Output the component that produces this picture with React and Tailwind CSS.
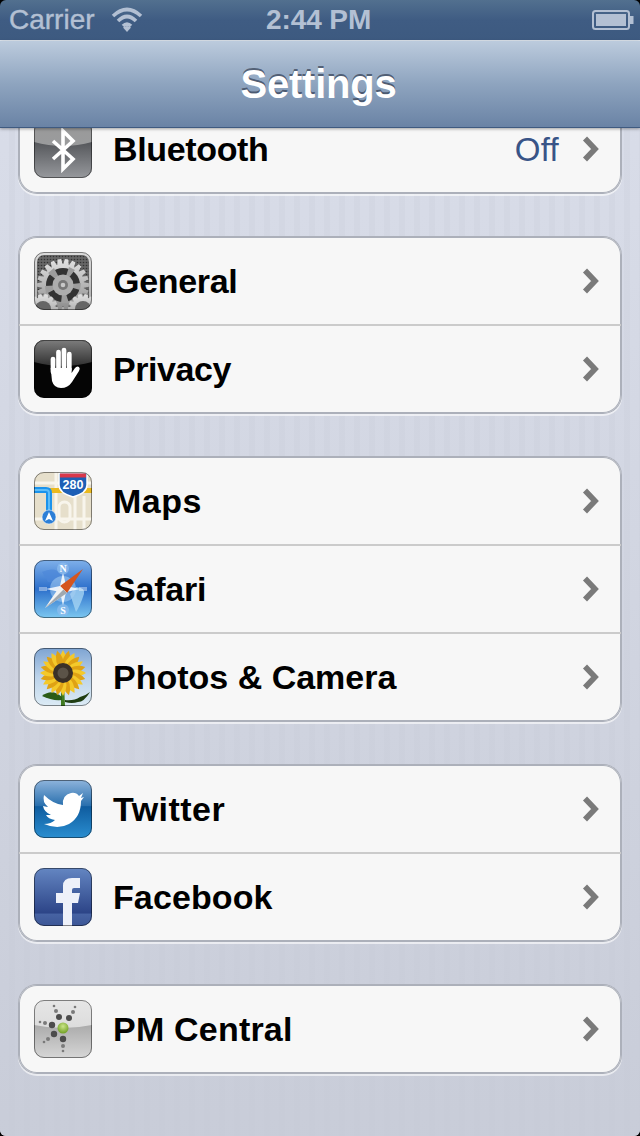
import React from 'react'

const gearPath = (cx, cy, r1, r2, n) => {
    const pts = []
    const step = (Math.PI * 2) / n
    for (let i = 0; i < n; i++) {
        const a = i * step
        const list = [[-0.5, r1], [-0.27, r2], [0.27, r2], [0.5, r1]]
        list.forEach(([o, r]) => {
            const t = a + o * step * 0.9
            pts.push(`${(cx + Math.cos(t) * r).toFixed(2)},${(cy + Math.sin(t) * r).toFixed(2)}`)
        })
    }
    return `M${pts.join('L')}Z`
}

const IconBox = ({ children }) => (
    <svg width="58" height="58" viewBox="0 0 58 58" className="shrink-0 block">
        <defs>
            <clipPath id="iconClip"><rect width="58" height="58" rx="10" /></clipPath>
        </defs>
        <g clipPath="url(#iconClip)">{children}</g>
        <rect x="0.5" y="0.5" width="57" height="57" rx="9.5" fill="none" stroke="#000" strokeOpacity="0.45" />
    </svg>
)

const BluetoothIcon = () => (
    <IconBox>
        <defs>
            <linearGradient id="btBg" x1="0" y1="0" x2="0" y2="1">
                <stop offset="0" stopColor="#9a9a9a" />
                <stop offset="1" stopColor="#9a9c9f" />
            </linearGradient>
            <linearGradient id="btLow" x1="0" y1="0" x2="0" y2="1">
                <stop offset="0" stopColor="#55575b" />
                <stop offset="1" stopColor="#97999d" />
            </linearGradient>
        </defs>
        <rect width="58" height="58" fill="url(#btBg)" />
        <path d="M0 22Q29 30 58 22V58H0Z" fill="url(#btLow)" />
        <path d="M19 21L39 39L29 49V11L39 21L19 39" fill="none" stroke="#fff" strokeWidth="3.600" />
    </IconBox>
)

const GeneralIcon = () => (
    <IconBox>
        <defs>
            <linearGradient id="gnFrame" x1="0" y1="0" x2="0" y2="1">
                <stop offset="0" stopColor="#dcdcdc" />
                <stop offset="1" stopColor="#a8a8a8" />
            </linearGradient>
            <pattern id="gnDots" width="3" height="3" patternUnits="userSpaceOnUse">
                <rect width="3" height="3" fill="#666" />
                <circle cx="1.5" cy="1.5" r="0.8" fill="#333" />
            </pattern>
            <linearGradient id="gnGear" x1="0" y1="0" x2="0" y2="1">
                <stop offset="0" stopColor="#e2e2e2" />
                <stop offset="1" stopColor="#8a8a8a" />
            </linearGradient>
        </defs>
        <rect width="58" height="58" fill="url(#gnFrame)" />
        <rect x="3" y="3" width="52" height="52" rx="7" fill="url(#gnDots)" />
        <path d={gearPath(29, 33, 21, 26, 22)} fill="url(#gnGear)" />
        <circle cx="29" cy="33" r="17" fill="#333" />
        <path d="M29 33L35 15L41 18ZM29 33L47 31L46 38ZM29 33L35 51H27ZM29 33L12 42L11 34ZM29 33L14 21L20 16Z" fill="#9d9d9d" />
        <circle cx="29" cy="33" r="10.500" fill="#adadad" />
        <circle cx="29" cy="33" r="5" fill="#777" />
        <circle cx="29" cy="33" r="2.300" fill="#c8c8c8" />
        <path d={gearPath(9, 57, 12, 15, 14)} fill="url(#gnGear)" />
        <path d={gearPath(49, 57, 12, 15, 14)} fill="url(#gnGear)" />
        <circle cx="9" cy="57" r="8" fill="#666" />
        <circle cx="49" cy="57" r="8" fill="#666" />
    </IconBox>
)

const PrivacyIcon = () => (
    <IconBox>
        <defs>
            <linearGradient id="prTop" x1="0" y1="0" x2="0" y2="1">
                <stop offset="0" stopColor="#7d7d7d" />
                <stop offset="1" stopColor="#303030" />
            </linearGradient>
        </defs>
        <rect width="58" height="58" fill="#050505" />
        <path d="M0 0H58V22Q29 30 0 22Z" fill="url(#prTop)" />
        <g stroke="#fff" strokeWidth="4.700" strokeLinecap="round" fill="none">
            <path d="M19 32V19" />
            <path d="M24.500 30V12" />
            <path d="M30 30V10" />
            <path d="M35.300 30V14" />
        </g>
        <path d="M16.700 28H37.600V33L41 28Q43 25.500 45 27Q46.500 28.500 45 31L38 42Q34 48 27 48Q20 48 18 41Z" fill="#fff" />
    </IconBox>
)

const MapsIcon = () => (
    <IconBox>
        <rect width="58" height="58" fill="#e6dfcb" />
        <path d="M0 11H58M22 0V58M0 47H58M41 24V58M50 24V58" stroke="#f8f5ec" strokeWidth="3" fill="none" />
        <rect x="25" y="30" width="11" height="20" rx="5.500" fill="none" stroke="#f8f5ec" strokeWidth="3" />
        <rect y="16" width="58" height="5" fill="#eab91e" />
        <path d="M0 18H12Q15 18 15 21V42" stroke="#1b93ec" strokeWidth="6" fill="none" />
        <path d="M0 18H12Q15 18 15 21V42" stroke="#5cbcf8" strokeWidth="2" fill="none" />
        <circle cx="15" cy="45" r="7" fill="#2d7fd6" stroke="#fff" strokeOpacity="0.5" />
        <path d="M15 40L19 49L15 47L11 49Z" fill="#fff" />
        <path d="M25 1H53V13Q53 21 39 25Q25 21 25 13Z" fill="#1d5fb5" stroke="#fff" strokeWidth="1.500" />
        <rect x="26" y="1.500" width="26" height="4" fill="#d8374a" />
        <text x="39" y="17" textAnchor="middle" fontSize="12.500" fontWeight="700" fill="#fff" fontFamily="'Liberation Sans', sans-serif">280</text>
    </IconBox>
)

const SafariIcon = () => (
    <IconBox>
        <defs>
            <linearGradient id="sfBg" x1="0" y1="0" x2="0" y2="1">
                <stop offset="0" stopColor="#7fb0ea" />
                <stop offset="0.5" stopColor="#2c6fcb" />
                <stop offset="1" stopColor="#7cc7f0" />
            </linearGradient>
        </defs>
        <rect width="58" height="58" fill="url(#sfBg)" />
        <path d="M42 27Q52 28 50 34Q46 46 42 52Q38 40 36 34Z" fill="#a4d3f2" opacity="0.8" />
        <path d="M8 12Q20 6 28 14Q24 24 14 22Z" fill="#4d87d8" opacity="0.7" />
        <circle cx="29" cy="29" r="13" fill="#a6cdf2" opacity="0.55" />
        <path d="M29 12L32 26L46 29L32 32L29 46L26 32L12 29L26 26Z" fill="#fff" opacity="0.85" />
        <path d="M5 28H13M5 30H13M45 28H53M45 30H53" stroke="#fff" strokeWidth="1" opacity="0.8" />
        <circle cx="29" cy="8.500" r="6" fill="#8fbdee" opacity="0.7" />
        <circle cx="29" cy="50" r="6" fill="#8fbdee" opacity="0.7" />
        <text x="29" y="12" textAnchor="middle" fontSize="10" fontWeight="700" fill="#fff" fontFamily="'Liberation Serif', serif">N</text>
        <text x="29" y="54" textAnchor="middle" fontSize="10" fontWeight="700" fill="#fff" fontFamily="'Liberation Serif', serif">S</text>
        <path d="M49 9L33 33L26 26Z" fill="#d5551f" />
        <path d="M11 48L33 33L26 26Z" fill="#f2f2f2" />
        <path d="M11 48L33 33L29.500 29.500Z" fill="#a0a8b0" />
    </IconBox>
)

const PhotosIcon = () => {
    const petals = Array.from({ length: 24 }, (_, i) => i * 15)
    return (
        <IconBox>
            <defs>
                <linearGradient id="phSky" x1="0" y1="0" x2="0" y2="1">
                    <stop offset="0" stopColor="#7ea4d2" />
                    <stop offset="0.5" stopColor="#bcd3ea" />
                    <stop offset="1" stopColor="#dcebf5" />
                </linearGradient>
            </defs>
            <rect width="58" height="58" fill="url(#phSky)" />
            <path d="M27 35L27 58H31L30 35Z" fill="#3f7a20" />
            <path d="M28 49Q18 40 8 48Q18 53 28 52Z" fill="#2b5c17" />
            <path d="M31 52Q40 53 46 49Q51 48 56 44Q50 54 44 54Q38 56 31 54Z" fill="#1f3d12" />
            {petals.map(r => (
                <path key={r} d="M29 25Q22 12 29 2Q36 12 29 25Z" transform={`rotate(${r} 29 25)`} fill={r % 30 === 0 ? '#f4c92a' : '#dfa214'} />
            ))}
            <circle cx="29" cy="25" r="10" fill="#3a3128" />
            <circle cx="29" cy="25" r="5.500" fill="#5b5348" />
        </IconBox>
    )
}

const TwitterIcon = () => (
    <IconBox>
        <defs>
            <linearGradient id="twBg" x1="0" y1="0" x2="0" y2="1">
                <stop offset="0" stopColor="#8eb4dc" />
                <stop offset="0.44" stopColor="#2a70ae" />
                <stop offset="0.46" stopColor="#0f5c9f" />
                <stop offset="1" stopColor="#2a8ed0" />
            </linearGradient>
        </defs>
        <rect width="58" height="58" fill="url(#twBg)" />
        <path
            d="M10 15Q19 24 29 25Q28 15 37 13Q42 12 45 16L49 13L47 18L50 17L47 21Q47 37 35 44Q24 50 10 44Q17 44 21 40Q14 39 12 35L17 35Q10 32 9 26L14 27Q8 22 10 15Z"
            fill="#fff"
        />
    </IconBox>
)

const FacebookIcon = () => (
    <IconBox>
        <defs>
            <linearGradient id="fbBg" x1="0" y1="0" x2="0" y2="1">
                <stop offset="0" stopColor="#6486c2" />
                <stop offset="0.78" stopColor="#2c4487" />
                <stop offset="0.79" stopColor="#4763a3" />
                <stop offset="1" stopColor="#3c5696" />
            </linearGradient>
        </defs>
        <rect width="58" height="58" fill="url(#fbBg)" />
        <path d="M29 58V35H22V25H29V18Q29 10 38 10H46V20H40Q38 20 38 22V25H46L44 35H38V58Z" fill="#eef1f9" />
    </IconBox>
)

const PmIcon = () => {
    const dots = [
        [20, 6, 1.300], [41, 7, 1.300], [22, 11, 2], [39, 12, 2], [25, 17, 3], [35, 18, 3],
        [6, 22, 1.300], [11, 23, 2], [18, 25, 3.200], [20, 34, 3.200], [14, 39, 2], [10, 42, 1.300],
        [29, 39, 3.200], [29, 46, 2], [29, 51, 1.300],
    ]
    return (
        <IconBox>
            <defs>
                <linearGradient id="pmBg" x1="0" y1="0" x2="0" y2="1">
                    <stop offset="0" stopColor="#e6e6e6" />
                    <stop offset="1" stopColor="#d2d2d2" />
                </linearGradient>
                <linearGradient id="pmLow" x1="0" y1="0" x2="0" y2="1">
                    <stop offset="0" stopColor="#ababab" />
                    <stop offset="1" stopColor="#d6d6d6" />
                </linearGradient>
                <radialGradient id="pmBall" cx="0.5" cy="0.35" r="0.6">
                    <stop offset="0" stopColor="#cbe58a" />
                    <stop offset="1" stopColor="#77a52a" />
                </radialGradient>
            </defs>
            <rect width="58" height="58" fill="url(#pmBg)" />
            <path d="M0 25Q29 31 58 25V58H0Z" fill="url(#pmLow)" />
            {dots.map(([x, y, r]) => (
                <circle key={`${x}-${y}`} cx={x} cy={y} r={r} fill={r > 2.500 ? '#4c4c4c' : '#7a7a7a'} />
            ))}
            <circle cx="29" cy="28" r="5.500" fill="url(#pmBall)" />
        </IconBox>
    )
}

const Row = ({ icon, label, value, tracking = '', first }) => (
    <div className={`flex items-center pl-[15px] pr-[21px] ${first ? 'h-[88px]' : 'h-[89px] -mt-[1px] pb-[1px] border-t-2 border-[#cbcbcb]'}`}>
        {icon}
        <span className={`ml-[21px] flex-1 text-[34px] font-bold text-black leading-none ${tracking}`}>{label}</span>
        {value && <span className="mr-[23px] text-[33px] text-[#385487] leading-none tracking-[0.3px]">{value}</span>}
        <svg width="18" height="26" viewBox="0 0 18 26" className="block">
            <path d="M3 2.500L13 13L3 23.500" fill="none" stroke="#7a7a7a" strokeWidth="5.600" />
        </svg>
    </div>
)

const Group = ({ items, className = '' }) => (
    <div className={`flex flex-col rounded-[18px] bg-[#f7f7f7] shadow-[inset_0_0_0_1px_#acb0ba,0_0_0_1px_#acb0ba,0_2px_0_1px_rgba(255,255,255,0.6)] ${className}`}>
        {items.map((item, i) => (
            <Row key={item.label} {...item} first={i === 0} />
        ))}
    </div>
)

const App = () => {
    return (
        <div className="w-[640px] h-[1136px] bg-black font-['Liberation_Sans',Arial,sans-serif]">
            <div className="flex flex-col h-full rounded-[6px] overflow-hidden">
                {/* status bar */}
                <div className="flex items-center h-[41px] shrink-0 pl-[9px] pr-[6px] border-b border-[#dfe6ef] bg-[linear-gradient(#52708f,#3f5c83_50%,#3d5a80)] text-[#b3c0d3] text-[28px] leading-none">
                    <div className="flex items-center w-[257px]">
                        <span className="[-webkit-text-stroke:0.4px_#b3c0d3]">Carrier</span>
                        <svg width="32" height="26" viewBox="0 0 32 26" className="ml-[16px] -mt-[2px]">
                            <path d="M2 10Q16 -3 30 10M7 15Q16 6 25 15M12 20Q16 16 20 20" fill="none" stroke="#b3c0d3" strokeWidth="3.600" />
                            <path d="M16 26L12 21.500Q16 18.500 20 21.500Z" fill="#b3c0d3" />
                        </svg>
                    </div>
                    <span className="font-bold tracking-[-0.1px]">2:44 PM</span>
                    <div className="flex justify-end flex-1">
                        <svg width="42" height="20" viewBox="0 0 42 20" className="block">
                            <rect x="1" y="1" width="36" height="18" rx="2.500" fill="none" stroke="#b3c0d3" strokeWidth="2" />
                            <rect x="4" y="4" width="30" height="12" fill="#b3c0d3" />
                            <rect x="38" y="6" width="3.500" height="8" fill="#b3c0d3" />
                        </svg>
                    </div>
                </div>
                {/* nav bar */}
                <div className="relative z-10 flex items-center justify-center h-[87px] shrink-0 pr-[3px] border-b border-[#3f5a80] bg-[linear-gradient(#bccbdd,#8ea4bf_50%,#6a83a5)] shadow-[0_1px_3px_rgba(0,0,0,0.35)]">
                    <h1 className="text-[40px] font-bold text-white leading-none tracking-[-0.25px] [text-shadow:0_-2px_0_rgba(40,50,70,0.65)]">Settings</h1>
                </div>
                {/* list */}
                <div className="flex flex-col flex-1 overflow-hidden px-[19px] bg-[linear-gradient(rgba(217,221,233,0.3),rgba(198,202,214,0.85)),repeating-linear-gradient(90deg,#d8dce8_0,#d8dce8_9px,#d2d6e2_9px,#d2d6e2_15px)]">
                    <Group className="-mt-[23px]" items={[{ icon: <BluetoothIcon />, label: 'Bluetooth', value: 'Off', tracking: 'tracking-[-0.35px]' }]} />
                    <Group className="mt-[44px]" items={[
                        { icon: <GeneralIcon />, label: 'General', tracking: 'tracking-[-0.3px]' },
                        { icon: <PrivacyIcon />, label: 'Privacy', tracking: 'tracking-[-0.45px]' },
                    ]} />
                    <Group className="mt-[44px]" items={[
                        { icon: <MapsIcon />, label: 'Maps', tracking: 'tracking-[0.5px]' },
                        { icon: <SafariIcon />, label: 'Safari', tracking: 'tracking-[-0.2px]' },
                        { icon: <PhotosIcon />, label: 'Photos & Camera' },
                    ]} />
                    <Group className="mt-[44px]" items={[
                        { icon: <TwitterIcon />, label: 'Twitter', tracking: 'tracking-[0.45px]' },
                        { icon: <FacebookIcon />, label: 'Facebook', tracking: 'tracking-[0.1px]' },
                    ]} />
                    <Group className="mt-[44px]" items={[{ icon: <PmIcon />, label: 'PM Central', tracking: 'tracking-[0.2px]' }]} />
                </div>
            </div>
        </div>
    )
}

export default App
